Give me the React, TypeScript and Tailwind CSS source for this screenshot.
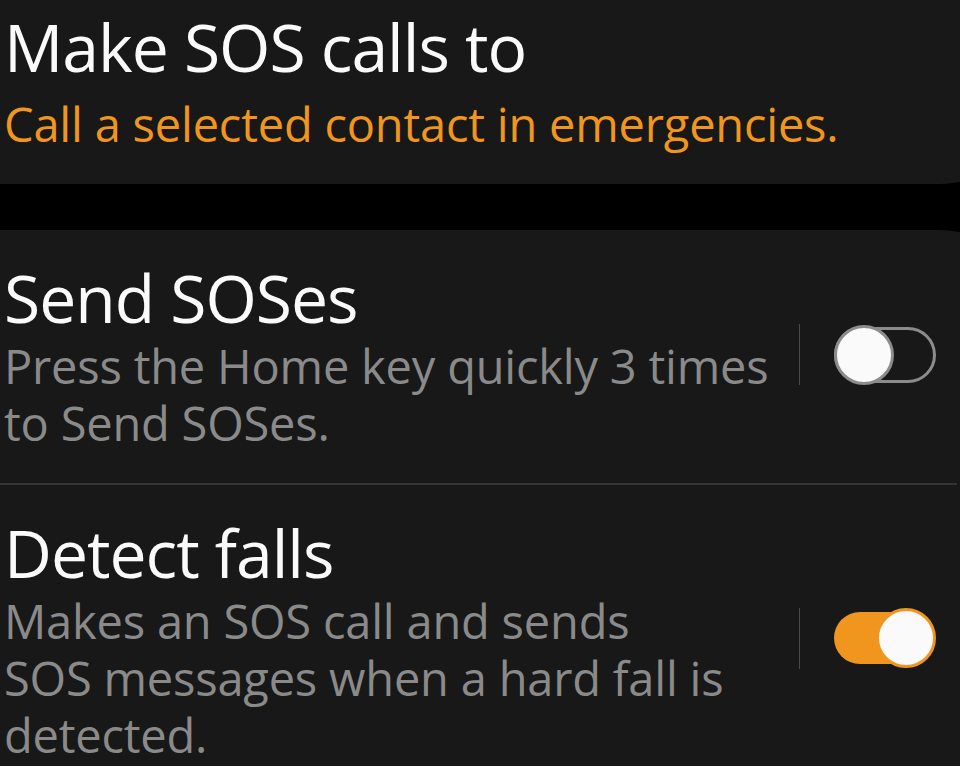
import React from 'react';

const font = { fontFamily: '"Open Sans", "Noto Sans", sans-serif' };

function Toggle({ on }: { on: boolean }) {
    if (on) {
        return (
            <div className="relative w-[102px] h-[60px] flex items-center">
                <div className="w-[100px] h-[52px] rounded-full bg-[#f0961f]" />
                <div className="absolute right-0 top-0 w-[60px] h-[60px] rounded-full bg-[#fafafa] border-[3px] border-[#f0961f]" />
            </div>
        );
    }
    return (
        <div className="relative w-[102px] h-[60px] flex items-center">
            <div className="w-[102px] h-[56px] rounded-full border-[3px] border-[#8c8c8c]" />
            <div className="absolute left-0 top-0 w-[60px] h-[60px] rounded-full bg-[#fafafa] border-[3px] border-[#8c8c8c]" />
        </div>
    );
}

function SwitchRow({ title, lines, on }: { title: string; lines: string[]; on: boolean }) {
    return (
        <div className="flex items-center pl-[4px] pr-[24px]">
            <div className="flex-1 min-w-0">
                <div className="text-[66px] leading-[80px] tracking-[-1px] text-[#fafafa]">{title}</div>
                <div className="mt-[1px] text-[47px] leading-[57px] tracking-[-0.2px] text-[#8a8a8a] whitespace-nowrap">
                    {lines.map((l, i) => (
                        <div key={i}>{l}</div>
                    ))}
                </div>
            </div>
            <div className="w-px h-[61px] bg-[#4a4a4a] mr-[34px]" />
            <Toggle on={on} />
        </div>
    );
}

export default function App() {
    return (
        <div className="w-[960px] h-[766px] bg-black overflow-hidden" style={font}>
            <div className="w-[1030px] h-[184px] bg-[#181818] rounded-br-[90px] pl-[4px] pt-[6px]">
                <div className="text-[66px] leading-[80px] tracking-[-1px] text-[#fafafa]">Make SOS calls to</div>
                <div className="mt-[8px] text-[47px] leading-[60px] tracking-[-0.2px] text-[#f0961f]">
                    Call a selected contact in emergencies.
                </div>
            </div>
            <div className="w-[1030px] h-[600px] mt-[46px] bg-[#181818] rounded-tr-[90px] pt-[27px]">
                <div className="w-[960px]">
                    <SwitchRow
                        title="Send SOSes"
                        lines={['Press the Home key quickly 3 times', 'to Send SOSes.']}
                        on={false}
                    />
                    <div className="h-[2px] bg-[#353535] mt-[31px] mb-[27px] w-[957px]" />
                    <SwitchRow
                        title="Detect falls"
                        lines={['Makes an SOS call and sends', 'SOS messages when a hard fall is', 'detected.']}
                        on={true}
                    />
                </div>
            </div>
        </div>
    );
}
